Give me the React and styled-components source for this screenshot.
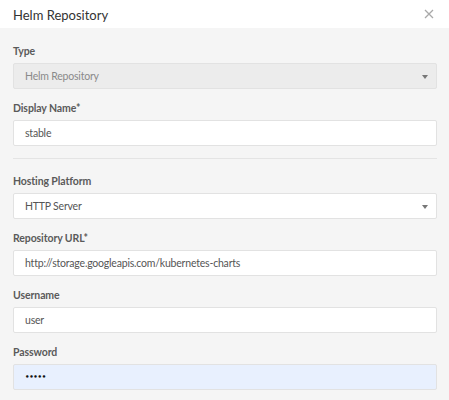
import React from "react";
import styled, { createGlobalStyle } from "styled-components";

const Global = createGlobalStyle`
  html, body { margin: 0; padding: 0; background: #f5f5f5; }
  body { font-family: Lato, "Open Sans", "Liberation Sans", sans-serif; }
  * { box-sizing: border-box; }
`;

const Modal = styled.div`
  width: 449px;
  height: 400px;
  background: #f5f5f5;
  overflow: hidden;
`;

const Header = styled.div`
  height: 28px;
  background: #fff;
  display: flex;
  align-items: center;
  justify-content: space-between;
  padding: 0 13px 0 13px;
`;

const Title = styled.div`
  font-size: 13px;
  color: #333;
  padding-top: 1px;
`;

const Close = styled.button`
  border: 0;
  background: none;
  padding: 0;
  width: 12px;
  height: 12px;
  display: flex;
  align-items: center;
  justify-content: center;
  margin-right: 1px;
`;

const Body = styled.div`
  padding: 16px 12px 0 13px;
  display: flex;
  flex-direction: column;
`;

const Field = styled.div`
  display: flex;
  flex-direction: column;
  margin-bottom: 12px;
`;

const Label = styled.label`
  font-size: 10.5px;
  line-height: 14px;
  font-weight: 700;
  letter-spacing: -0.1px;
  color: #5a5a5a;
  margin-bottom: 5px;
`;

const Box = styled.div`
  height: 26px;
  border: 1px solid #e2e2e2;
  border-radius: 2px;
  background: ${(p) => (p.$disabled ? "#ececec" : p.$autofill ? "#e8f0fe" : "#fff")};
  display: flex;
  align-items: center;
  justify-content: space-between;
  padding: 0 8px 0 11px;
  font-size: 10.5px;
  letter-spacing: -0.2px;
  color: ${(p) => (p.$disabled ? "#8a8a8a" : "#555")};
`;

const Arrow = styled.span`
  width: 0;
  height: 0;
  border-left: 3px solid transparent;
  border-right: 3px solid transparent;
  border-top: 4px solid #777;
  margin-top: 1px;
`;

const Dots = styled.span`
  color: #111;
  font-size: 7px;
  font-weight: 700;
  letter-spacing: -0.3px;
  font-family: "DejaVu Sans", sans-serif;
`;

const Separator = styled.hr`
  border: 0;
  border-top: 1px solid #e4e4e4;
  margin: 0 0 15px 0;
`;

export default function App() {
  return (
    <>
      <Global />
      <Modal>
        <Header>
          <Title>Helm Repository</Title>
          <Close aria-label="close">
            <svg width="10" height="10" viewBox="0 0 10 10">
              <path d="M1 1L9 9M9 1L1 9" stroke="#a9a9a9" strokeWidth="1.3" />
            </svg>
          </Close>
        </Header>
        <Body>
          <Field>
            <Label>Type</Label>
            <Box $disabled>
              Helm Repository
              <Arrow />
            </Box>
          </Field>
          <Field>
            <Label>Display Name*</Label>
            <Box>stable</Box>
          </Field>
          <Separator />
          <Field>
            <Label>Hosting Platform</Label>
            <Box>
              HTTP Server
              <Arrow />
            </Box>
          </Field>
          <Field>
            <Label>Repository URL*</Label>
            <Box>http://storage.googleapis.com/kubernetes-charts</Box>
          </Field>
          <Field>
            <Label>Username</Label>
            <Box>user</Box>
          </Field>
          <Field>
            <Label>Password</Label>
            <Box $autofill>
              <Dots>•••••</Dots>
            </Box>
          </Field>
        </Body>
      </Modal>
    </>
  );
}
